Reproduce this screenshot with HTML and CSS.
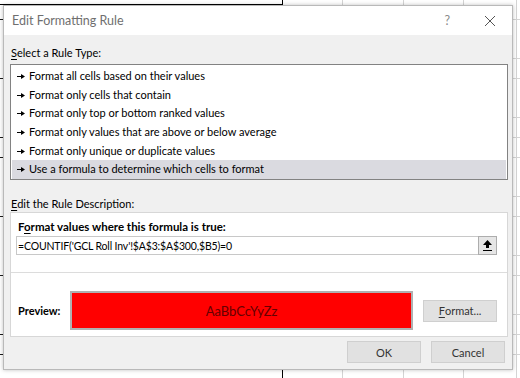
FILE: index.html
```html
<!DOCTYPE html>
<html lang="en">
<head>
    <meta charset="UTF-8">
    <title>Edit Formatting Rule</title>
    <link rel="stylesheet" href="styles.css">
</head>
<body>

    <div class="dialog">
        <div class="titlebar">
            <span class="title">Edit Formatting Rule</span>
            <span class="help">?</span>
            <svg class="close" width="12" height="12" viewBox="0 0 12 12"><path d="M1 1 L11 11 M11 1 L1 11" stroke="#555" stroke-width="1" fill="none"/></svg>
        </div>

        <div class="body">
            <div class="label"><u>S</u>elect a Rule Type:</div>
            <ul class="rules">
                <li><svg class="arrow" width="8" height="5" viewBox="0 0 8 5"><rect x="0" y="2" width="5" height="1" fill="#000"/><polygon points="4,0 8,2.5 4,5" fill="#000"/></svg>Format all cells based on their values</li>
                <li><svg class="arrow" width="8" height="5" viewBox="0 0 8 5"><rect x="0" y="2" width="5" height="1" fill="#000"/><polygon points="4,0 8,2.5 4,5" fill="#000"/></svg>Format only cells that contain</li>
                <li><svg class="arrow" width="8" height="5" viewBox="0 0 8 5"><rect x="0" y="2" width="5" height="1" fill="#000"/><polygon points="4,0 8,2.5 4,5" fill="#000"/></svg>Format only top or bottom ranked values</li>
                <li><svg class="arrow" width="8" height="5" viewBox="0 0 8 5"><rect x="0" y="2" width="5" height="1" fill="#000"/><polygon points="4,0 8,2.5 4,5" fill="#000"/></svg>Format only values that are above or below average</li>
                <li><svg class="arrow" width="8" height="5" viewBox="0 0 8 5"><rect x="0" y="2" width="5" height="1" fill="#000"/><polygon points="4,0 8,2.5 4,5" fill="#000"/></svg>Format only unique or duplicate values</li>
                <li class="selected"><svg class="arrow" width="8" height="5" viewBox="0 0 8 5"><rect x="0" y="2" width="5" height="1" fill="#000"/><polygon points="4,0 8,2.5 4,5" fill="#000"/></svg>Use a formula to determine which cells to format</li>
            </ul>

            <div class="label label-desc"><u>E</u>dit the Rule Description:</div>
            <div class="desc">
                <div class="desc-title">F<u>o</u>rmat values where this formula is true:</div>
                <div class="formula">
                    <span class="formula-text">=COUNTIF('GCL Roll Inv'!$A$3:$A$300,$B5)=0</span>
                    <span class="collapse">
                        <svg width="11" height="12" viewBox="0 0 11 12"><polygon points="5.5,0 10,5 7,5 7,8 4,8 4,5 1,5" fill="#000"/><rect x="1" y="10" width="9" height="1" fill="#000"/></svg>
                    </span>
                </div>
                <div class="sep"></div>
                <div class="preview-row">
                    <span class="preview-label">Preview:</span>
                    <div class="preview">AaBbCcYyZz</div>
                    <span class="btn btn-format"><u>F</u>ormat...</span>
                </div>
            </div>

            <div class="actions">
                <span class="btn">OK</span>
                <span class="btn">Cancel</span>
            </div>
        </div>
    </div>

</body>
</html>
```

FILE: styles.css
```css
* { margin: 0; padding: 0; box-sizing: border-box; }
html, body { width: 520px; height: 378px; overflow: hidden; }
body {
    font-family: Lato, "Noto Sans", sans-serif; font-size: 11px; color: #000;
    background-color: #fff;
    background-image:
        linear-gradient(#000, #000),
        linear-gradient(#000, #000),
        repeating-linear-gradient(to bottom, transparent 0 19.2px, #1a1a1a 19.2px 19.7px),
        linear-gradient(#d4d4d4, #d4d4d4),
        linear-gradient(#d4d4d4, #d4d4d4),
        linear-gradient(#d4d4d4, #d4d4d4),
        linear-gradient(#d4d4d4, #d4d4d4),
        repeating-linear-gradient(to bottom, transparent 0 19px, #d4d4d4 19px 19.7px);
    background-repeat: no-repeat;
    background-size: 283px 1px, 1px 378px, 3px 378px, 1px 378px, 1px 378px, 1px 378px, 1px 378px, 7px 378px;
    background-position: 0 4px, 282px 0, 0 0, 342px 0, 403px 0, 463px 0, 516px 0, 513px 0;
}

.dialog {
    margin: 5px 0 0 3px; width: 510px; height: 365px;
    background: #f0f0f0; border: 1px solid #b9b9b9;
    box-shadow: 0 0 4px rgba(0, 0, 0, 0.25);
    display: flex; flex-direction: column;
}
.titlebar {
    height: 29px; background: #fff; display: flex; align-items: center;
    padding-left: 8px;
}
.title { font-size: 12.5px; color: #6f6f6f; flex: 1; }
.help { color: #8a8a8a; font-size: 12.5px; margin-right: 34px; }
.close { margin-right: 16px; }

.body { padding: 0 4px 0 6px; display: flex; flex-direction: column; }
.label { line-height: 16px; margin-top: 10px; margin-bottom: 3px; padding-left: 1px; }
.label-desc { margin-top: 16px; margin-bottom: 0; }
u { text-decoration: underline; text-underline-offset: 2px; }

.rules {
    list-style: none; height: 116px; background: #fff;
    border: 1px solid #828282; padding: 2px 1px 0 1px;
}
.rules li {
    height: 18.7px; line-height: 18.7px; display: flex; align-items: center;
    padding-left: 5px;
}
.rules li.selected { background: #dadae0; }
.arrow { margin-right: 4px; }

.desc {
    height: 125px; background: #fff; border: 1px solid #d7d7d7;
    padding: 6px 10px 0 5px;
}
.desc-title { font-weight: bold; font-size: 11.5px; line-height: 16px; padding-left: 2px; }
.formula {
    margin-top: 1px; height: 19px; border: 1px solid #c8c8c8;
    display: flex; align-items: center; justify-content: space-between;
}
.formula-text { padding-left: 1px; font-size: 10.5px; letter-spacing: -0.15px; }
.collapse {
    width: 19px; height: 19px; margin: -1px -1px -1px 0;
    background: #e6e6e6; border: 1px solid #adadad;
    display: flex; align-items: center; justify-content: center;
}
.sep { height: 1px; background: #dcdcdc; margin: 17px -10px 0 -5px; }

.preview-row { margin-top: 18px; display: flex; align-items: center; }
.preview-label { font-weight: bold; width: 54px; padding-left: 2px; }
.preview {
    width: 343px; height: 39px; background: #ff0000; border: 2px solid #b0b0b0;
    display: flex; align-items: center; justify-content: center;
    color: #650000; font-size: 13px;
}
.btn {
    width: 74px; height: 22px; background: #e1e1e1; border: 1px solid #cfcfcf;
    display: flex; align-items: center; justify-content: center; color: #333;
}
.btn-format { margin-left: 10px; }

.actions { margin-top: 4px; display: flex; justify-content: flex-end; gap: 10px; padding-right: 3px; }
```
